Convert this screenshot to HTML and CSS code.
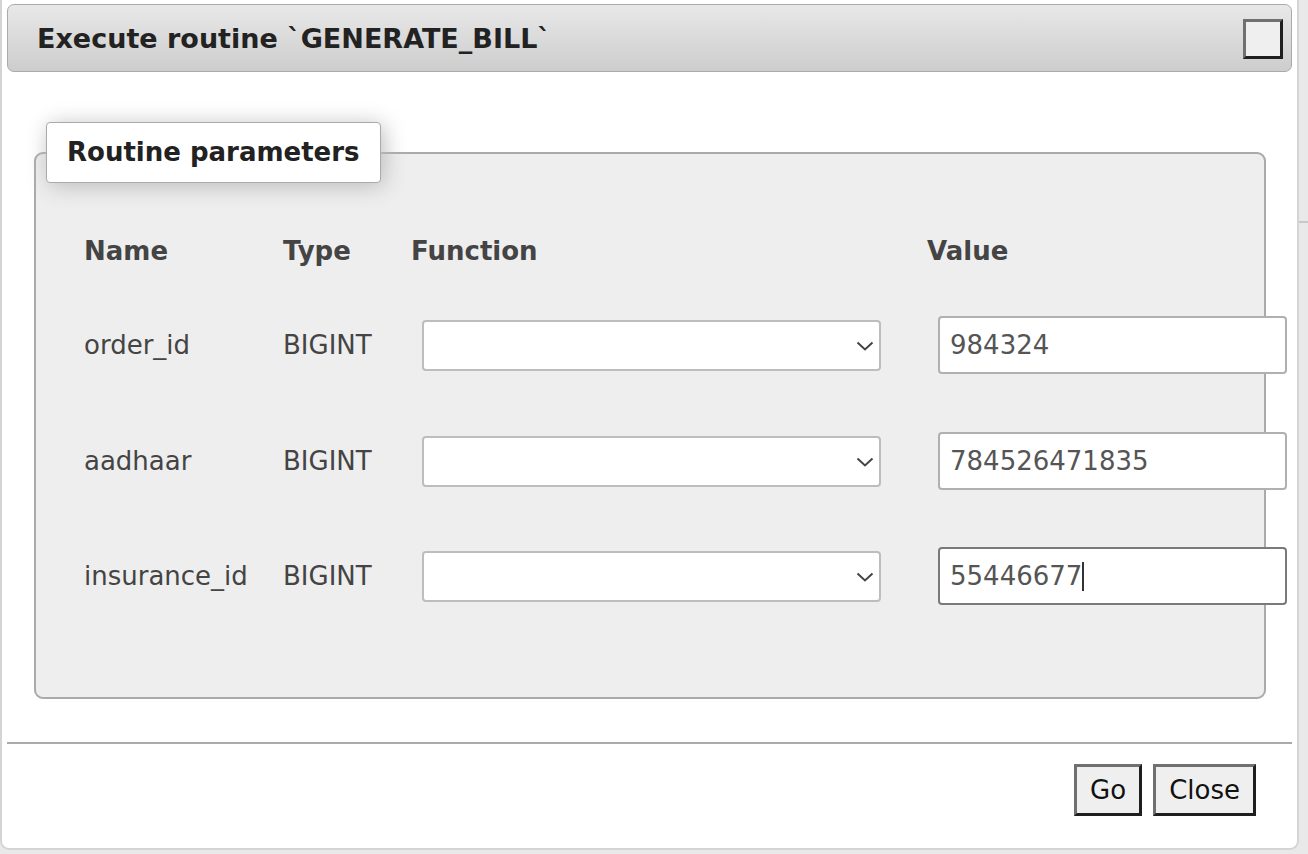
FILE: index.html
```html
<!DOCTYPE html>
<html lang="en">
<head>
<meta charset="utf-8">
<title>Execute routine</title>
<link rel="stylesheet" href="styles.css">
</head>
<body>
<div class="page-behind"></div>
<div class="dialog" role="dialog" aria-labelledby="dlg-title">
  <div class="titlebar">
    <span class="title" id="dlg-title">Execute routine `GENERATE_BILL`</span>
    <button class="close-box" type="button" aria-label="Close"></button>
  </div>
  <div class="dialog-content">
    <fieldset class="params">
      <legend class="params-legend">Routine parameters</legend>
      <div class="param-grid">
        <div class="head">Name</div>
        <div class="head">Type</div>
        <div class="head">Function</div>
        <div class="head">Value</div>

        <div class="cell">order_id</div>
        <div class="cell">BIGINT</div>
        <div class="cell"><div class="select-wrap"><select class="func" aria-label="Function for order_id"><option></option></select><svg class="chev" width="18" height="10" viewBox="0 0 18 10"><path d="M1.5 1.5 L9 8.5 L16.5 1.5" fill="none" stroke="#444" stroke-width="2"/></svg></div></div>
        <div class="cell"><input class="val" type="text" value="984324" aria-label="order_id"></div>

        <div class="cell">aadhaar</div>
        <div class="cell">BIGINT</div>
        <div class="cell"><div class="select-wrap"><select class="func" aria-label="Function for aadhaar"><option></option></select><svg class="chev" width="18" height="10" viewBox="0 0 18 10"><path d="M1.5 1.5 L9 8.5 L16.5 1.5" fill="none" stroke="#444" stroke-width="2"/></svg></div></div>
        <div class="cell"><input class="val" type="text" value="784526471835" aria-label="aadhaar"></div>

        <div class="cell">insurance_id</div>
        <div class="cell">BIGINT</div>
        <div class="cell"><div class="select-wrap"><select class="func" aria-label="Function for insurance_id"><option></option></select><svg class="chev" width="18" height="10" viewBox="0 0 18 10"><path d="M1.5 1.5 L9 8.5 L16.5 1.5" fill="none" stroke="#444" stroke-width="2"/></svg></div></div>
        <div class="cell"><div class="input-wrap"><input class="val focused" type="text" value="55446677" aria-label="insurance_id"><span class="caret"></span></div></div>
      </div>
    </fieldset>
  </div>
  <div class="buttonpane">
    <button class="btn" type="button">Go</button>
    <button class="btn" type="button">Close</button>
  </div>
</div>
</body>
</html>
```

FILE: styles.css
```css
html, body {
  margin: 0;
  padding: 0;
}
body {
  width: 1308px;
  height: 854px;
  background: #e9e9e9;
  font-family: "DejaVu Sans", Verdana, sans-serif;
  overflow: hidden;
  position: relative;
}
.page-behind {
  margin-top: 221px;
  border-top: 2px solid #c9c9c9;
}
.dialog {
  position: absolute;
  left: 0;
  top: 0;
  width: 1299px;
  height: 850px;
  box-sizing: border-box;
  background: #fff;
  border: 2px solid #d4d4d4;
  border-top: 0;
  border-radius: 0 0 9px 9px;
  padding: 4px 5px 0 5px;
}
.titlebar {
  height: 68px;
  box-sizing: border-box;
  border: 1px solid #aaa;
  border-radius: 7px;
  background: linear-gradient(#e8e8e8, #cdcdcd);
  display: flex;
  align-items: center;
  justify-content: space-between;
  padding: 0 8px 0 29px;
}
.title {
  font-weight: bold;
  font-size: 27px;
  color: #222;
  white-space: nowrap;
}
.close-box {
  width: 40px;
  height: 40px;
  box-sizing: border-box;
  margin: 2px 0 0 0;
  padding: 0;
  background: #efefef;
  border-style: solid;
  border-width: 3px;
  border-color: #707070 #1f1f1f #1f1f1f #707070;
}
.dialog-content {
  padding: 0 26px 0 27px;
  margin-top: 50px;
}
.params {
  margin: 0;
  min-width: 0;
  border: 2px solid #aaa;
  border-radius: 9px;
  background: #eee;
  padding: 32px 10px 64px 10px;
}
.params-legend {
  background: #fff;
  border: 1px solid #aaa;
  border-radius: 4px;
  box-shadow: 3px 3px 22px #bbb;
  padding: 0 20px;
  height: 61px;
  box-sizing: border-box;
  line-height: 59px;
  font-weight: bold;
  font-size: 26px;
  color: #222;
  margin-left: 0;
}
.param-grid {
  margin-left: 38px;
  width: 1150px;
  display: grid;
  grid-template-columns: 199px 128px 516px 307px;
  grid-template-rows: 72px 116px 116px 114px;
  align-items: center;
  color: #444;
  font-size: 26px;
}
.head {
  font-weight: bold;
}
.cell {
  white-space: nowrap;
}
.select-wrap {
  position: relative;
  margin-left: 11px;
  width: 459px;
  height: 51px;
}
.func {
  appearance: none;
  -webkit-appearance: none;
  width: 459px;
  height: 51px;
  box-sizing: border-box;
  border: 2px solid #bdbdbd;
  border-radius: 4px;
  background: #fff;
  margin: 0;
  font-family: inherit;
  font-size: 26px;
}
.chev {
  position: absolute;
  right: 7px;
  top: 21px;
  pointer-events: none;
}
.input-wrap {
  position: relative;
  width: 360px;
  height: 58px;
}
.val {
  display: block;
  margin: 0 0 0 11px;
  width: 349px;
  height: 58px;
  box-sizing: border-box;
  border: 2px solid #b0b0b0;
  border-radius: 4px;
  background: #fff;
  padding: 0 10px;
  font-family: "DejaVu Sans", Verdana, sans-serif;
  font-size: 26px;
  color: #555;
  outline: none;
}
.val.focused {
  border-color: #7a7a7a;
}
.caret {
  position: absolute;
  left: 155px;
  top: 15px;
  width: 2px;
  height: 29px;
  background: #333;
}
.buttonpane {
  margin-top: 43px;
  border-top: 2px solid #aaa;
  padding: 20px 36px 0 0;
  display: flex;
  justify-content: flex-end;
  gap: 11px;
}
.btn {
  height: 52px;
  box-sizing: border-box;
  margin: 0;
  padding: 0 13px;
  background: #efefef;
  border-style: solid;
  border-width: 3px;
  border-color: #707070 #1f1f1f #1f1f1f #707070;
  font-family: "DejaVu Sans", Verdana, sans-serif;
  font-size: 26px;
  color: #111;
  line-height: 46px;
}
```
